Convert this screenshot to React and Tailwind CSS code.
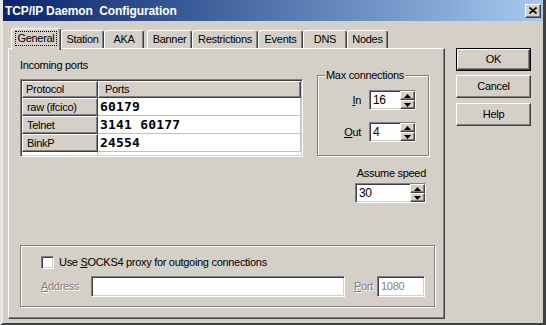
import React from 'react';

const raised = 'border border-t-white border-l-white border-r-[#404040] border-b-[#404040] shadow-[inset_-1px_-1px_0_#808080]';
const sunken = 'border border-t-[#808080] border-l-[#808080] border-r-white border-b-white shadow-[inset_1px_1px_0_#404040,inset_-1px_-1px_0_#d4d0c8]';
const etched = 'border border-[#808080] shadow-[1px_1px_0_#fff,inset_1px_1px_0_#fff]';
const disabled = 'text-[#808080] [text-shadow:1px_1px_0_#fff]';

const tabs = [
    { label: 'General', w: 'w-[50px]', active: true },
    { label: 'Station', w: 'w-[43px]' },
    { label: 'AKA', w: 'w-[40px] mr-[3px]' },
    { label: 'Banner', w: 'w-[45px]' },
    { label: 'Restrictions', w: 'w-[66px]' },
    { label: 'Events', w: 'w-[45px]' },
    { label: 'DNS', w: 'w-[44px]' },
    { label: 'Nodes', w: 'w-[41px]' },
];

const ports = [
    { proto: 'raw (ifcico)', value: '60179' },
    { proto: 'Telnet', value: '3141 60177' },
    { proto: 'BinkP', value: '24554' },
];

function Arrow({ down }) {
    return (
        <svg width="7" height="4" viewBox="0 0 7 4" className="block">
            <polygon points={down ? '0,0 7,0 3.5,4' : '3.5,0 7,4 0,4'} fill="#000" />
        </svg>
    );
}

function Spinner({ value, width }) {
    return (
        <div className={`flex h-[20px] ${width} bg-white ${sunken}`}>
            <span className="flex-1 pl-[3px] text-[12px] leading-[18px]">{value}</span>
            <div className="flex w-[15px] flex-col">
                <div className={`flex h-[9px] items-center justify-center bg-[#d4d0c8] ${raised}`}>
                    <Arrow />
                </div>
                <div className={`flex h-[9px] items-center justify-center bg-[#d4d0c8] ${raised}`}>
                    <Arrow down />
                </div>
            </div>
        </div>
    );
}

function Button({ children, isDefault, className = '' }) {
    return (
        <div className={`w-[75px] h-[23px] ${isDefault ? 'border border-black' : ''} ${className}`}>
            <div className={`flex h-full items-center justify-center text-[11px] ${raised}`}>
                {children}
            </div>
        </div>
    );
}

export default function App() {
    return (
        <div className="w-[546px] h-[325px] bg-[#d4d0c8] border-l-[3px] border-l-[#e8e6e2] border-r-[3px] border-r-[#404040] border-b-[2px] border-b-[#404040] font-['Liberation_Sans',Arial,sans-serif] tracking-[-0.3px] text-black select-none overflow-hidden">
            {/* Title bar */}
            <div className="flex h-[21px] items-center justify-between bg-gradient-to-r from-[#0a246a] to-[#a6caf0] pl-[2px] pr-[2px]">
                <span className="text-[12px] font-bold text-white whitespace-pre tracking-[-0.1px]">TCP/IP Daemon  Configuration</span>
                <div className={`flex h-[14px] w-[16px] items-center justify-center bg-[#d4d0c8] ${raised}`}>
                    <svg width="8" height="7" viewBox="0 0 8 7">
                        <path d="M0.5 0.5 L7.5 6.5 M7.5 0.5 L0.5 6.5" stroke="#000" strokeWidth="1.6" />
                    </svg>
                </div>
            </div>

            <div className="flex pt-[7px] pl-[5px]">
                {/* Tab control */}
                <div className="flex flex-col">
                    <div className="flex h-[20px] items-end pl-[3px]">
                        {tabs.map((t) => (
                            <div
                                key={t.label}
                                className={`${t.w} flex items-center justify-center rounded-t-[3px] border-t border-l border-t-white border-l-white border-r border-r-[#404040] shadow-[inset_-1px_0_0_#808080] bg-[#d4d0c8] text-[11px] ${t.active ? 'relative z-10 h-[22px] -mb-[2px] pb-[3px]' : 'h-[18px]'}`}
                            >
                                {t.active ? (
                                    <span className="border border-dotted border-black px-[1px] leading-[13px]">{t.label}</span>
                                ) : (
                                    <span className="leading-[13px]">{t.label}</span>
                                )}
                            </div>
                        ))}
                    </div>

                    <div className={`flex h-[271px] w-[437px] flex-col pt-[10px] pl-[11px] ${raised}`}>
                        <div className="flex">
                            {/* Incoming ports */}
                            <div className="flex flex-col">
                                <span className="text-[11px] leading-[13px]">Incoming ports</span>
                                <div className={`mt-[7px] flex h-[78px] w-[283px] flex-col bg-white ${sunken} p-[1px]`}>
                                    <div className="flex h-[17px] text-[11px]">
                                        <div className={`flex w-[76px] items-center pl-[3px] bg-[#d4d0c8] ${raised}`}>Protocol</div>
                                        <div className={`flex flex-1 items-center pl-[6px] bg-[#d4d0c8] ${raised}`}>Ports</div>
                                    </div>
                                    {ports.map((p) => (
                                        <div key={p.proto} className="flex h-[18px]">
                                            <div className={`flex w-[76px] items-center pl-[4px] bg-[#d4d0c8] text-[11px] ${raised}`}>{p.proto}</div>
                                            <div className="flex flex-1 items-center pl-[2px] border-b border-r border-[#c0c0c0] font-['DejaVu_Sans_Mono',monospace] font-bold text-[13px] tracking-[0.2px]">
                                                {p.value}
                                            </div>
                                        </div>
                                    ))}
                                    <div className="flex flex-1">
                                        <div className="w-[76px] border-r border-[#c0c0c0]" />
                                    </div>
                                </div>
                            </div>

                            {/* Right column */}
                            <div className="ml-[14px] mt-[16px] flex w-[112px] flex-col items-end">
                                <div className={`relative flex h-[81px] w-full flex-col items-end pt-[14px] pr-[12px] ${etched}`}>
                                    <span className="absolute -top-[7px] left-[7px] bg-[#d4d0c8] px-[1px] text-[11px] leading-[13px]">Max connections</span>
                                    <div className="flex items-center gap-[8px]">
                                        <span className="text-[11px]"><u>I</u>n</span>
                                        <Spinner value="16" width="w-[47px]" />
                                    </div>
                                    <div className="mt-[12px] flex items-center gap-[8px]">
                                        <span className="text-[11px]"><u>O</u>ut</span>
                                        <Spinner value="4" width="w-[47px]" />
                                    </div>
                                </div>
                                <span className="mt-[11px] mr-[3px] text-[11px] leading-[13px]">Assume speed</span>
                                <div className="mt-[3px] mr-[3px]">
                                    <Spinner value="30" width="w-[71px]" />
                                </div>
                            </div>
                        </div>

                        {/* SOCKS group */}
                        <div className={`mt-auto mb-[11px] flex h-[62px] w-[415px] flex-col pt-[10px] pl-[20px] ${etched}`}>
                            <div className="flex items-center gap-[5px]">
                                <div className={`h-[13px] w-[13px] bg-white ${sunken}`} />
                                <span className="text-[11px] leading-[13px]">Use <u>S</u>OCKS4 proxy for outgoing connections</span>
                            </div>
                            <div className="mt-[7px] flex items-center">
                                <span className={`w-[50px] text-[11px] ${disabled}`}><u>A</u>ddress</span>
                                <div className={`h-[21px] w-[254px] bg-white ${sunken}`} />
                                <span className={`ml-[9px] w-[23px] text-[11px] ${disabled}`}><u>P</u>ort</span>
                                <div className={`flex h-[21px] w-[48px] items-center bg-white pl-[3px] text-[11px] text-[#808080] ${sunken}`}>1080</div>
                            </div>
                        </div>
                    </div>
                </div>

                {/* Buttons */}
                <div className="ml-[11px] mt-[20px] flex flex-col">
                    <Button isDefault>OK</Button>
                    <Button className="mt-[4px]">Cancel</Button>
                    <Button className="mt-[5px]">Help</Button>
                </div>
            </div>
        </div>
    );
}
